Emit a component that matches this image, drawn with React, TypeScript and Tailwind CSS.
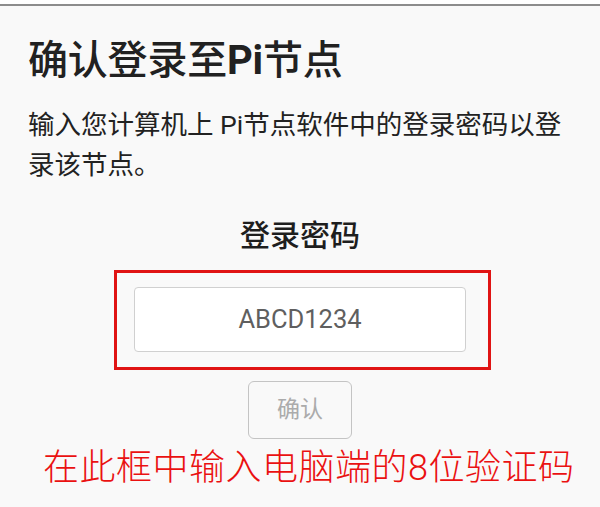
import React from "react";

export default function App() {
  const cjk = { fontFamily: '"Roboto", "Noto Sans CJK SC", sans-serif' };
  return (
    <div className="w-[600px] h-[507px] overflow-hidden bg-white flex flex-col" style={cjk}>
      <div className="h-[4px] bg-white" />
      <div className="h-[2px] bg-[#8c8c8c]" />
      <div className="flex-1 bg-[#f9f9f9] flex flex-col pl-[28px] pt-[31px]">
        <h1 className="text-[40px] leading-[48px] font-medium text-[#212121] tracking-[-0.2px]">
          确认登录至<span className="font-bold">Pi</span>节点
        </h1>
        <p className="mt-[20px] w-[545px] text-[26.5px] leading-[40px] text-[#222]">
          输入您计算机上 Pi节点软件中的登录密码以登录该节点。
        </p>
        <div className="mt-[31px] w-[544px] text-center text-[30px] leading-[40px] font-medium text-[#1e1e1e]">
          登录密码
        </div>
        <div className="mt-[14px] ml-[86px] w-[377px] h-[100px] border-[3px] border-[#e01414] pt-[14px] pl-[17px]">
          <div className="w-[332px] h-[65px] bg-white border border-[#d0d0d0] rounded-[4px] flex items-center justify-center text-[25.5px] text-[#5f5f5f]">
            ABCD1234
          </div>
        </div>
        <div className="mt-[11px] ml-[220px] w-[104px] h-[58px] border-[1.5px] border-[#c4c4c4] rounded-[6px] flex items-center justify-center text-[23px] text-[#ababab]">
          确认
        </div>
        <div className="mt-[9px] ml-[15px] text-[36px] leading-[40px] tracking-[0.5px] font-light text-[#ea1111] whitespace-nowrap">
          在此框中输入电脑端的8位验证码
        </div>
      </div>
    </div>
  );
}
